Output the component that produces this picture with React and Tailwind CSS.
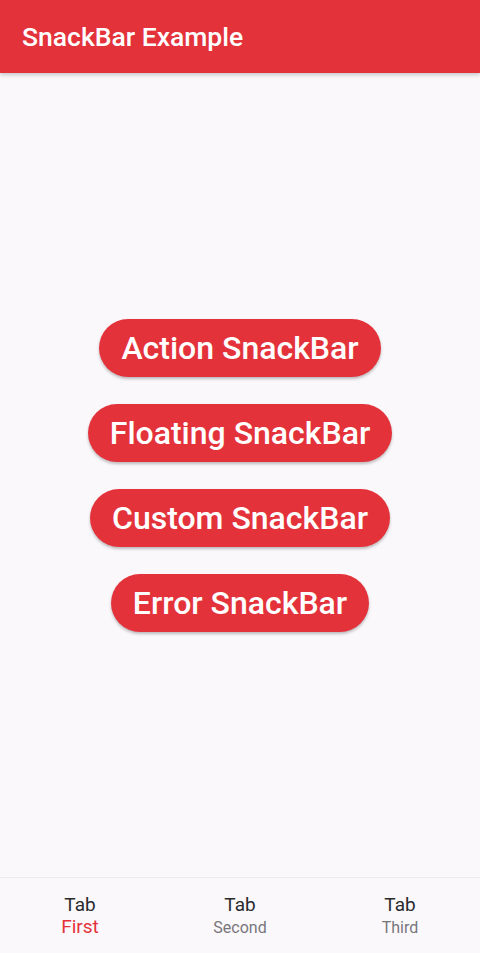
export default function App() {
  const buttons = ["Action SnackBar", "Floating SnackBar", "Custom SnackBar", "Error SnackBar"];
  const tabs = [
    { label: "First", active: true },
    { label: "Second", active: false },
    { label: "Third", active: false },
  ];

  return (
    <div className="h-[953px] w-[480px] flex flex-col bg-[#fbf8fb] font-['Roboto',sans-serif]">
      <header className="h-[73px] shrink-0 bg-[#e4323b] flex items-center px-[22px] shadow-[0_2px_4px_rgba(0,0,0,0.2)] z-10">
        <h1 className="text-white text-[26.5px] font-medium">SnackBar Example</h1>
      </header>

      <main className="flex-1 flex flex-col items-center justify-center gap-[27px]">
        {buttons.map((b) => (
          <button
            key={b}
            className="h-[58px] px-[22px] rounded-full bg-[#e4323b] text-white text-[32px] font-medium shadow-[0_2px_3px_rgba(0,0,0,0.25)]"
          >
            {b}
          </button>
        ))}
      </main>

      <nav className="h-[76px] shrink-0 border-t border-[#ecebee] grid grid-cols-3">
        {tabs.map((t) => (
          <div key={t.label} className="flex flex-col items-center pt-[16px]">
            <span className="text-[19px] leading-[22px] text-[#2a2a2e]">Tab</span>
            <span
              className={
                t.active
                  ? "text-[19px] leading-[22px] text-[#e4323b]"
                  : "text-[16px] leading-[22px] text-[#77767b] mt-[1px]"
              }
            >
              {t.label}
            </span>
          </div>
        ))}
      </nav>
    </div>
  );
}
